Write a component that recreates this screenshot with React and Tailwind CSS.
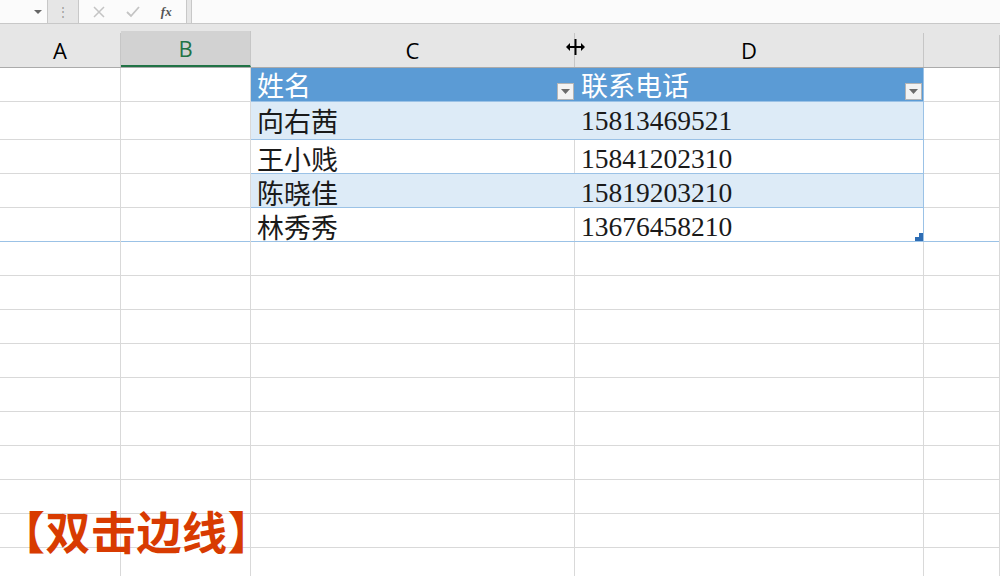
import React from 'react';

const cols = [121, 130, 324, 349, 76];
const letters = ['A', 'B', 'C', 'D', ''];

const people = [
  { name: '向右茜', phone: '15813469521', band: true, h: 38, shift: 'pt-[1px]' },
  { name: '王小贱', phone: '15841202310', band: false, h: 34, shift: 'pt-[5px]' },
  { name: '陈晓佳', phone: '15819203210', band: true, h: 34, shift: 'pt-[5px]' },
  { name: '林秀秀', phone: '13676458210', band: false, h: 34, shift: 'pt-[5px]' },
];

const cjk = { fontFamily: '"Noto Sans CJK SC", "Liberation Serif", serif' };
const num = { fontFamily: '"Liberation Serif", "Noto Sans CJK SC", serif' };

const FilterBtn = () => (
  <div className="w-[17px] h-[17px] bg-[#f3f3f3] border border-[#b5b5b5] flex items-center justify-center mb-[1px] mr-[1px]">
    <svg width="9" height="5" viewBox="0 0 9 5">
      <path d="M0 0 L9 0 L4.5 5 Z" fill="#6b6b6b" />
    </svg>
  </div>
);

const Cell = ({ w, className = '', children }) => (
  <div className={`shrink-0 h-full border-r border-[#d9d9d9] ${className}`} style={{ width: w }}>
    {children}
  </div>
);

export default function App() {
  const emptyRows = Array.from({ length: 10 });

  return (
    <div className="relative w-[1000px] h-[576px] overflow-hidden bg-white select-none" style={{ fontFamily: '"Open Sans", "Noto Sans", sans-serif' }}>
      {/* formula bar */}
      <div className="h-[24px] bg-[#e6e6e6] flex border-b border-[#c8c8c8]">
        <div className="w-[48px] h-full bg-[#fbfbfb] border-r border-[#c8c8c8] flex items-center justify-end pr-[5px]">
          <svg width="8" height="4" viewBox="0 0 8 4"><path d="M0 0 L8 0 L4 4 Z" fill="#666" /></svg>
        </div>
        <div className="w-[30px] flex items-center justify-center text-[#9a9a9a] text-[12px]">⋮</div>
        <div className="w-[109px] h-full bg-[#fbfbfb] border-x border-[#c8c8c8] flex items-center justify-around px-[4px]">
          <svg width="12" height="12" viewBox="0 0 12 12"><path d="M1 1 L11 11 M11 1 L1 11" stroke="#c4c4c4" strokeWidth="1.5" /></svg>
          <svg width="14" height="12" viewBox="0 0 14 12"><path d="M1 6 L5 10 L13 1" stroke="#c4c4c4" strokeWidth="1.8" fill="none" /></svg>
          <span className="text-[#555] text-[13px] italic font-bold" style={{ fontFamily: '"Liberation Serif", serif' }}>fx</span>
        </div>
        <div className="w-[4px]" />
        <div className="flex-1 h-full bg-[#fbfbfb] border-l border-[#c8c8c8]" />
      </div>

      {/* column headers */}
      <div className="h-[44px] bg-[#e6e6e6] flex border-b border-[#ababab]">
        {cols.map((w, i) => (
          <div
            key={i}
            className={`shrink-0 h-full flex flex-col ${i === 1 ? 'bg-[#d2d2d2]' : ''}`}
            style={{ width: w }}
          >
            <div className="h-[11px] bg-[#e6e6e6]" />
            <div className={`flex-1 flex items-center justify-center text-[22px] pt-[1px] border-r border-[#c6c6c6] ${i === 1 ? 'bg-[#d2d2d2] text-[#217346] border-b-2 border-b-[#217346]' : 'text-black'}`}>
              {letters[i]}
            </div>
          </div>
        ))}
      </div>

      {/* header row of table */}
      <div className="h-[34px] flex border-b border-[#9bc2e6]">
        <Cell w={cols[0]} />
        <Cell w={cols[1]} />
        <div className="shrink-0 h-full bg-[#5b9bd5] flex items-end justify-between pl-[6px]" style={{ width: cols[2] }}>
          <span className="text-white text-[27px] leading-[34px] self-center" style={cjk}>姓名</span>
          <FilterBtn />
        </div>
        <div className="shrink-0 h-full bg-[#5b9bd5] flex items-end justify-between pl-[6px] border-r border-[#9bc2e6]" style={{ width: cols[3] }}>
          <span className="text-white text-[27px] leading-[34px] self-center" style={cjk}>联系电话</span>
          <FilterBtn />
        </div>
        <Cell w={cols[4]} />
      </div>

      {/* data rows */}
      {people.map((p, i) => (
        <div key={i} className="flex border-b border-[#9bc2e6]" style={{ height: p.h }}>
          <div className="shrink-0 border-r border-[#d9d9d9] border-t border-t-[#d9d9d9] -mt-px" style={{ width: cols[0], height: p.h + 1 }} />
          <div className="shrink-0 border-r border-[#d9d9d9] border-t border-t-[#d9d9d9] -mt-px" style={{ width: cols[1], height: p.h + 1 }} />
          <div
            className={`shrink-0 h-full flex items-center pl-[6px] text-[27px] leading-[26px] text-[#1a1a1a] ${p.shift} ${p.band ? 'bg-[#ddebf7]' : 'bg-white border-r border-[#d9d9d9]'}`}
            style={{ width: cols[2], ...cjk }}
          >
            {p.name}
          </div>
          <div
            className={`relative shrink-0 h-full flex items-center pl-[6px] text-[27.5px] leading-[26px] text-[#1a1a1a] border-r border-[#9bc2e6] ${p.shift} ${p.band ? 'bg-[#ddebf7]' : 'bg-white'}`}
            style={{ width: cols[3], ...num }}
          >
            {p.phone}
            {i === 3 && (
              <svg className="absolute right-0 bottom-0" width="8" height="8" viewBox="0 0 8 8">
                <path d="M8 0 L8 8 L0 8 L0 4 L4 4 L4 0 Z" fill="#2e6db4" />
              </svg>
            )}
          </div>
          <div className="shrink-0 border-r border-[#d9d9d9] border-t border-t-[#d9d9d9] -mt-px" style={{ width: cols[4], height: p.h + 1 }} />
        </div>
      ))}

      {/* empty grid */}
      {emptyRows.map((_, r) => (
        <div key={r} className="h-[34px] flex border-b border-[#d9d9d9]">
          {cols.map((w, i) => (
            <Cell key={i} w={w} />
          ))}
        </div>
      ))}

      {/* resize cursor */}
      <svg className="absolute left-[565px] top-[38px]" width="21" height="18" viewBox="0 0 21 18">
        <path d="M10.5 1 L10.5 17" stroke="#000" strokeWidth="2" />
        <path d="M2 9 L19 9" stroke="#000" strokeWidth="2" />
        <path d="M1 9 L5 5 L5 13 Z" fill="#000" />
        <path d="M20 9 L16 5 L16 13 Z" fill="#000" />
      </svg>

      {/* annotation */}
      <div
        className="absolute left-0 top-[508px] text-[#d83b01] text-[45px] font-bold leading-none tracking-[0.5px]"
        style={{ fontFamily: '"Noto Sans CJK SC", sans-serif' }}
      >
        【双击边线】
      </div>
    </div>
  );
}
